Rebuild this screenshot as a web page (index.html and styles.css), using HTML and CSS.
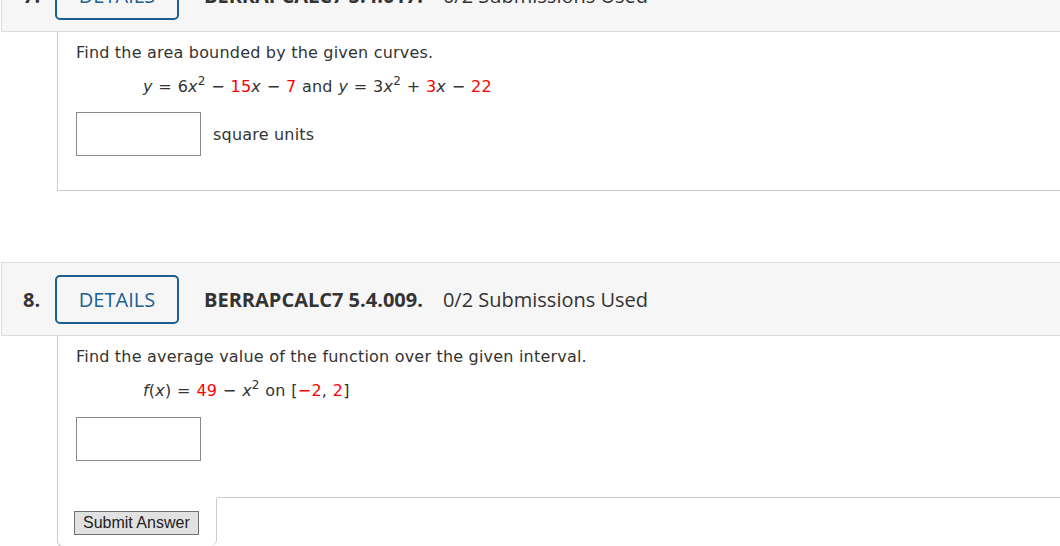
FILE: index.html
```html
<!DOCTYPE html>
<html>
<head>
<meta charset="utf-8">
<link rel="stylesheet" href="styles.css">
</head>
<body>
<div class="page">
  <div class="question">
    <div class="qhead">
      <span class="qnum">7.</span>
      <span class="details">DETAILS</span>
      <span class="qid">BERRAPCALC7 5.4.017.</span>
      <span class="subs">0/2 Submissions Used</span>
    </div>
    <div class="qbody first">
      <p class="prompt">Find the area bounded by the given curves.</p>
      <p class="formula"><i>y</i> = 6<i>x</i><sup>2</sup> &minus; <span class="red">15</span><i>x</i> &minus; <span class="red">7</span> and <i>y</i> = 3<i>x</i><sup>2</sup> + <span class="red">3</span><i>x</i> &minus; <span class="red">22</span></p>
      <div class="answer-row">
        <span class="answer-box"></span>
        <span class="unit">square units</span>
      </div>
    </div>
  </div>

  <div class="question second">
    <div class="qhead">
      <span class="qnum">8.</span>
      <span class="details">DETAILS</span>
      <span class="qid">BERRAPCALC7 5.4.009.</span>
      <span class="subs">0/2 Submissions Used</span>
    </div>
    <div class="qbody last">
      <div class="inner">
        <p class="prompt">Find the average value of the function over the given interval.</p>
        <p class="formula"><i>f</i>(<i>x</i>) = <span class="red">49</span> &minus; <i>x</i><sup>2</sup> on [<span class="red">&minus;2</span>, <span class="red">2</span>]</p>
        <div class="answer-row">
          <span class="answer-box"></span>
        </div>
      </div>
      <div class="footer">
        <div class="actions"><button class="submit">Submit Answer</button></div>
        <div class="rest"></div>
      </div>
    </div>
  </div>
</div>
</body>
</html>
```

FILE: styles.css
```css
html, body {
  margin: 0;
  padding: 0;
  background: #ffffff;
  overflow: hidden;
}

.page {
  width: 1120px;
  margin-top: -42px;
  padding-left: 1px;
}

.qhead {
  display: flex;
  align-items: center;
  height: 72px;
  border: 1px solid #dcdcdc;
  background: #f6f6f6;
  padding-left: 21px;
  font-family: "Open Sans", sans-serif;
  font-size: 20px;
  color: #333333;
}

.qnum {
  font-weight: 700;
  width: 32px;
  color: #333333;
}

.details {
  box-sizing: border-box;
  width: 124px;
  height: 49px;
  border: 2px solid #1b5f93;
  border-radius: 5px;
  display: flex;
  align-items: center;
  justify-content: center;
  color: #1b5f93;
  font-weight: 500;
}

.qid {
  font-weight: 700;
  margin-left: 25px;
  color: #333333;
}

.subs {
  margin-left: 20px;
  color: #333333;
}

.qbody {
  margin-left: 56px;
  border-left: 1px solid #cccccc;
  font-family: "DejaVu Sans", Verdana, sans-serif;
  font-size: 16px;
  letter-spacing: 0.2px;
  color: #333333;
}

.qbody.first {
  border-bottom: 1px solid #cccccc;
  height: 159px;
  box-sizing: border-box;
  padding-top: 11px;
  padding-left: 18px;
}

.second {
  margin-top: 71px;
}

.qbody.last {
  border-bottom: 1px solid #cccccc;
  border-bottom-left-radius: 6px;
}

.qbody.last .inner {
  padding-top: 11px;
  padding-left: 18px;
}

.prompt {
  margin: 0;
  line-height: 20px;
}

.formula {
  margin: 14px 0 0 67px;
  line-height: 20px;
  word-spacing: 0.4px;
}

.formula sup {
  font-size: 12px;
  vertical-align: 7px;
  line-height: 0;
}

.red {
  color: #ff0000;
}

.answer-row {
  display: flex;
  align-items: center;
  margin-top: 15px;
}

.last .answer-row {
  margin-top: 16px;
}

.answer-box {
  display: block;
  box-sizing: border-box;
  width: 125px;
  height: 44px;
  border: 1px solid #8a8a8a;
  background: #ffffff;
}

.unit {
  margin-left: 12px;
}

.footer {
  display: flex;
  margin-top: 36px;
}

.actions {
  width: 159px;
  height: 48px;
  border-right: 1px solid #cccccc;
  border-bottom-right-radius: 6px;
  margin-top: 1px;
  padding-top: 13px;
  padding-left: 16px;
  box-sizing: border-box;
  letter-spacing: 0;
}

.rest {
  flex: 1;
  border-top: 1px solid #cccccc;
}

.submit {
  font-family: "Liberation Sans", Arial, sans-serif;
  font-size: 16px;
  letter-spacing: 0;
  color: #222222;
  background: #e1e1e1;
  border: 1px solid #707070;
  border-radius: 0;
  padding: 1px 8px;
  height: 24px;
  line-height: 20px;
  margin: 0;
}
```
